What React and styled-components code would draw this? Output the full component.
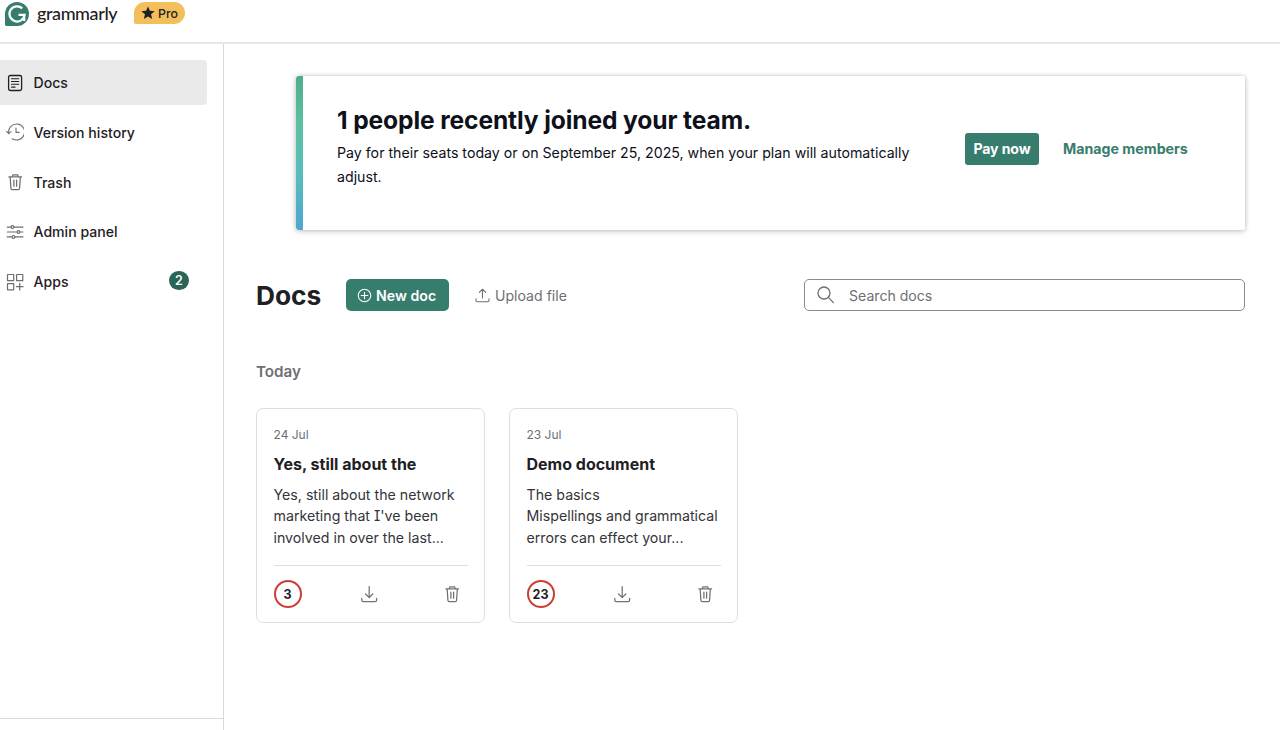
import React from "react";
import styled, { createGlobalStyle, ThemeProvider } from "styled-components";

const theme = {
  colors: {
    brand: "#377d6e",
    brand_strong: "#2a6658",
    text_strong: "#1f2023",
    text_body: "#333438",
    text_weak: "#6e6f73",
    line: "#dedede",
    red: "#d13c32",
    yellow: "#f2bf5a",
  },
};

const GlobalStyle = createGlobalStyle`
  * {
    box-sizing: border-box;
  }

  body {
    margin: 0;
    background: #ffffff;
    font-family: Inter, "Liberation Sans", sans-serif;
    color: ${({ theme }) => theme.colors.text_strong};
    -webkit-font-smoothing: antialiased;
  }

  h1, h2, h3, p {
    margin: 0;
  }

  button {
    font-family: inherit;
    padding: 0;
    border: none;
    background: none;
  }

  svg {
    display: block;
    flex: none;
  }
`;

const Page = styled.div`
  display: flex;
  flex-direction: column;
  height: 730px;
  overflow: hidden;
`;

const Header = styled.header`
  display: flex;
  align-items: flex-start;
  height: 44px;
  padding: 2px 0 0 5px;
  border-bottom: 2px solid #e8e8e8;
  flex: none;
`;

const Wordmark = styled.span`
  margin-left: 8px;
  width: 81px;
  font-family: Lato, sans-serif;
  font-size: 18px;
  font-weight: 500;
  line-height: 22px;
  letter-spacing: -0.4px;
  white-space: nowrap;
`;

const ProBadge = styled.span`
  display: flex;
  align-items: center;
  gap: 3px;
  margin-left: 16px;
  width: 51px;
  height: 22px;
  padding-left: 7px;
  border-radius: 11px 11px 11px 2px;
  background: ${({ theme }) => theme.colors.yellow};
  font-size: 12.3px;
  font-weight: 500;
`;

const Body = styled.div`
  display: flex;
  flex: 1;
  min-height: 0;
`;

const Sidebar = styled.aside`
  display: flex;
  flex-direction: column;
  justify-content: space-between;
  width: 224px;
  border-right: 1px solid #d9d9d9;
  flex: none;
`;

const Nav = styled.nav`
  display: flex;
  flex-direction: column;
  gap: 4.8px;
  padding-top: 16px;
`;

const NavItem = styled.button`
  display: flex;
  align-items: center;
  width: 207px;
  height: 45px;
  padding: 0 18px 0 6px;
  border-radius: 0 4px 4px 0;
  background: ${({ $active }) => ($active ? "#eaeaea" : "transparent")};
  color: ${({ $active, theme }) =>
    $active ? theme.colors.text_strong : theme.colors.text_weak};
`;

const NavLabel = styled.span`
  flex: 1;
  margin-left: 9.5px;
  text-align: left;
  font-size: 14.1px;
  font-weight: 500;
  color: ${({ theme }) => theme.colors.text_strong};
`;

const NavCount = styled.span`
  display: flex;
  align-items: center;
  justify-content: center;
  width: 20px;
  height: 19px;
  margin-top: -2px;
  border-radius: 10px;
  background: ${({ theme }) => theme.colors.brand_strong};
  color: #ffffff;
  font-size: 12.5px;
  font-weight: 600;
`;

const SidebarFooter = styled.div`
  height: 12px;
  border-top: 1px solid #dadada;
`;

const Main = styled.main`
  flex: 1;
  padding: 32px 35px 0 32px;
`;

const BannerShadow = styled.div`
  margin-left: 40px;
  border-radius: 3px;
  box-shadow: 0 0 4px rgba(0, 0, 0, 0.22), 0 2px 6px rgba(0, 0, 0, 0.12);
`;

const Banner = styled.section`
  display: flex;
  height: 154px;
  border-radius: 3px;
  overflow: hidden;
  background: #ffffff;
`;

const BannerStripe = styled.div`
  width: 7px;
  background: linear-gradient(#50ac8b, #5bc0a0 30%, #57bcbc 65%, #4ea6cf);
`;

const BannerText = styled.div`
  width: 662px;
  padding: 29px 0 0 34px;
`;

const BannerTitle = styled.h2`
  font-size: 24.6px;
  line-height: 31px;
  font-weight: 700;
  letter-spacing: -0.12px;
  color: #0e101a;
`;

const BannerCopy = styled.p`
  width: 590px;
  margin-top: 5px;
  font-size: 14.2px;
  line-height: 24px;
  color: #0e101a;
`;

const BannerActions = styled.div`
  display: flex;
  align-items: center;
  gap: 24px;
  height: 32px;
  margin-top: 57px;
`;

const PayButton = styled.button`
  width: 74px;
  height: 32px;
  padding-bottom: 1px;
  border-radius: 3px;
  background: ${({ theme }) => theme.colors.brand};
  color: #ffffff;
  font-size: 14.1px;
  font-weight: 700;
  letter-spacing: -0.1px;
  white-space: nowrap;
`;

const ManageLink = styled.button`
  padding-bottom: 1px;
  color: ${({ theme }) => theme.colors.brand};
  font-size: 14.2px;
  font-weight: 700;
  white-space: nowrap;
`;

const Toolbar = styled.div`
  display: flex;
  align-items: center;
  height: 32px;
  margin-top: 49px;
`;

const Title = styled.h1`
  width: 90px;
  padding-top: 1px;
  font-size: 26.3px;
  font-weight: 700;
  line-height: 32px;
`;

const NewButton = styled.button`
  display: flex;
  align-items: center;
  gap: 4px;
  width: 103px;
  height: 32px;
  padding-left: 11px;
  border-radius: 5px;
  background: ${({ theme }) => theme.colors.brand};
  color: #ffffff;
  font-size: 14.2px;
  font-weight: 600;
  white-space: nowrap;
`;

const UploadButton = styled.button`
  display: flex;
  align-items: center;
  gap: 5px;
  margin-left: 26px;
  color: ${({ theme }) => theme.colors.text_weak};
  font-size: 14.1px;
  white-space: nowrap;
`;

const SearchBox = styled.label`
  display: flex;
  align-items: center;
  gap: 14px;
  width: 441px;
  height: 32px;
  margin-left: auto;
  padding-left: 12px;
  border: 1px solid #8c8c8e;
  border-radius: 5px;
  color: ${({ theme }) => theme.colors.text_weak};
`;

const SearchInput = styled.input`
  flex: 1;
  min-width: 0;
  padding: 0;
  border: none;
  outline: none;
  background: none;
  font-family: inherit;
  font-size: 14.1px;

  &::placeholder {
    color: ${({ theme }) => theme.colors.text_weak};
    opacity: 1;
  }
`;

const GroupTitle = styled.h2`
  margin-top: 50px;
  font-size: 15.2px;
  line-height: 22px;
  font-weight: 600;
  color: ${({ theme }) => theme.colors.text_weak};
`;

const CardList = styled.div`
  display: flex;
  gap: 24px;
  margin-top: 25px;
`;

const DocCard = styled.article`
  display: flex;
  flex-direction: column;
  width: 229px;
  height: 215px;
  padding: 17px 16px 0 16.5px;
  border: 1px solid ${({ theme }) => theme.colors.line};
  border-radius: 7px;
`;

const CardDate = styled.p`
  font-size: 12px;
  line-height: 17px;
  color: ${({ theme }) => theme.colors.text_weak};
`;

const CardTitle = styled.h3`
  margin-top: 10px;
  font-size: 16px;
  line-height: 22px;
  font-weight: 700;
  white-space: nowrap;
`;

const CardExcerpt = styled.p`
  height: 64px;
  margin-top: 9px;
  font-size: 14.2px;
  line-height: 21.3px;
  font-feature-settings: "cv08";
  color: ${({ theme }) => theme.colors.text_body};
  white-space: pre-line;
`;

const CardFooter = styled.div`
  display: flex;
  align-items: center;
  justify-content: space-between;
  height: 57px;
  margin-top: 17px;
  padding-right: 7px;
  border-top: 1px solid ${({ theme }) => theme.colors.line};
  color: #707174;
`;

const AlertCount = styled.span`
  display: flex;
  align-items: center;
  justify-content: center;
  width: 28px;
  height: 28px;
  border: 2px solid ${({ theme }) => theme.colors.red};
  border-radius: 50%;
  font-size: 12.5px;
  font-weight: 700;
  color: ${({ theme }) => theme.colors.text_strong};
`;

const CardActions = styled.div`
  display: flex;
  justify-content: space-between;
  width: 101px;
`;

const IconButton = styled.button`
  color: inherit;
`;

function Icon({ size = 18, width = 1.2, children }) {
  return (
    <svg
      width={size}
      height={size}
      viewBox="0 0 18 18"
      fill="none"
      stroke="currentColor"
      strokeWidth={width}
      strokeLinecap="round"
      strokeLinejoin="round"
    >
      {children}
    </svg>
  );
}

const DocsIcon = () => (
  <Icon width={1.3}>
    <rect x="2.6" y="1.500" width="13" height="15" rx="1.700" />
    <path d="M5.500 4.700h7.200M5.500 7.500h7.200M5.500 10.300h7.200M5.500 13.100h3.600" strokeWidth="1.100" />
  </Icon>
);

const HistoryIcon = () => (
  <Icon width={1.1}>
    <path d="M2.700 10.300A8 8 0 1 1 6.300 15.700" />
    <path d="M.6 8.300l2.100 2.400 2.300-2M10 5v4.400h3.200" />
  </Icon>
);

const TrashIcon = () => (
  <Icon width={1.25}>
    <path d="M2.900 3.900h12.700M6.300 3.700l.5-1.900h4.900l.5 1.900M4.200 4.200l.7 11c.1.9.5 1.300 1.300 1.300h6.100c.8 0 1.200-.4 1.300-1.300l.7-11M7.900 7.200v6M10.600 7.200v6" />
  </Icon>
);

const AdminIcon = () => (
  <Icon width={1.2}>
    <path d="M1.200 4.100h3.600M8 4.100h9M1.200 9h9.700M14.100 9H17M1.200 13.900h4.600M9 13.900h8" />
    <circle cx="6.4" cy="4.1" r="1.4" />
    <circle cx="12.5" cy="9" r="1.4" />
    <circle cx="7.400" cy="13.900" r="1.400" />
  </Icon>
);

const AppsIcon = () => (
  <Icon width={1.2}>
    <rect x="1.500" y="1.500" width="6.200" height="6.200" rx=".3" />
    <rect x="10.600" y="1.500" width="6.200" height="6.200" rx=".3" />
    <rect x="1.500" y="10.600" width="6.200" height="6.200" rx=".3" />
    <path d="M13.700 10.400v6.600M10.400 13.700H17" />
  </Icon>
);

const PlusIcon = () => (
  <Icon size={15} width={1.3}>
    <circle cx="9" cy="9" r="7.500" />
    <path d="M9 5v8M5 9h8" />
  </Icon>
);

const UploadIcon = () => (
  <Icon size={15} width={1.3}>
    <path d="M1.200 12.800v2.200c0 .9.500 1.400 1.400 1.400h12.800c.9 0 1.400-.5 1.400-1.400v-2.200M9 12V1.600M5.200 5.300L9 1.500l3.800 3.800" />
  </Icon>
);

const DownloadIcon = () => (
  <Icon width={1.25}>
    <path d="M1.800 13.400v1.800c0 .9.500 1.400 1.400 1.400h12c.9 0 1.400-.5 1.400-1.400v-1.800M9.200 1.500v11M5.600 9l3.600 3.600L12.800 9" />
  </Icon>
);

const SearchIcon = () => (
  <Icon width={1.3}>
    <circle cx="7" cy="7" r="6" />
    <path d="M11.400 11.400l5 5.200" />
  </Icon>
);

const Logo = () => (
  <svg width="24" height="24" viewBox="0 0 24 24">
    <path d="M12 0a12 12 0 1 1 0 24H1.500Q0 24 0 22.500V12A12 12 0 0 1 12 0z" fill="#377d6e" />
    <path
      d="M17.300 6.400A7.600 7.600 0 1 0 19.600 12.800H13.500M19.200 14.500v4.400"
      fill="none"
      stroke="#fff"
      strokeWidth="2.200"
    />
  </svg>
);

const Star = () => (
  <svg width="14" height="14" viewBox="0 0 14 14">
    <path
      d="M7 .4l1.900 4.400 4.800.4L10 8.300l1.200 4.800L7 10.500l-4.200 2.600L4 8.300.3 5.200l4.800-.4z"
      fill="#1f2023"
    />
  </svg>
);

const navItems = [
  { label: "Docs", icon: <DocsIcon />, active: true },
  { label: "Version history", icon: <HistoryIcon /> },
  { label: "Trash", icon: <TrashIcon /> },
  { label: "Admin panel", icon: <AdminIcon /> },
  { label: "Apps", icon: <AppsIcon />, count: 2 },
];

const docs = [
  {
    date: "24 Jul",
    title: "Yes, still about the",
    excerpt:
      "Yes, still about the network\nmarketing that I've been\ninvolved in over the last...",
    alerts: 3,
  },
  {
    date: "23 Jul",
    title: "Demo document",
    excerpt: "The basics\nMispellings and grammatical\nerrors can effect your...",
    alerts: 23,
  },
];

function DocCardItem({ doc }) {
  return (
    <DocCard>
      <CardDate>{doc.date}</CardDate>
      <CardTitle>{doc.title}</CardTitle>
      <CardExcerpt>{doc.excerpt}</CardExcerpt>
      <CardFooter>
        <AlertCount>{doc.alerts}</AlertCount>
        <CardActions>
          <IconButton aria-label="Download">
            <DownloadIcon />
          </IconButton>
          <IconButton aria-label="Delete">
            <TrashIcon />
          </IconButton>
        </CardActions>
      </CardFooter>
    </DocCard>
  );
}

function App() {
  return (
    <ThemeProvider theme={theme}>
      <GlobalStyle />
      <Page>
        <Header>
          <Logo />
          <Wordmark>grammarly</Wordmark>
          <ProBadge>
            <Star />
            Pro
          </ProBadge>
        </Header>
        <Body>
          <Sidebar>
            <Nav>
              {navItems.map((item) => (
                <NavItem key={item.label} $active={item.active}>
                  {item.icon}
                  <NavLabel>{item.label}</NavLabel>
                  {item.count && <NavCount>{item.count}</NavCount>}
                </NavItem>
              ))}
            </Nav>
            <SidebarFooter />
          </Sidebar>
          <Main>
            <BannerShadow>
              <Banner>
                <BannerStripe />
                <BannerText>
                  <BannerTitle>1 people recently joined your team.</BannerTitle>
                  <BannerCopy>
                    Pay for their seats today or on September 25, 2025, when your
                    plan will automatically adjust.
                  </BannerCopy>
                </BannerText>
                <BannerActions>
                  <PayButton>Pay now</PayButton>
                  <ManageLink>Manage members</ManageLink>
                </BannerActions>
              </Banner>
            </BannerShadow>
            <Toolbar>
              <Title>Docs</Title>
              <NewButton>
                <PlusIcon />
                New doc
              </NewButton>
              <UploadButton>
                <UploadIcon />
                Upload file
              </UploadButton>
              <SearchBox>
                <SearchIcon />
                <SearchInput placeholder="Search docs" />
              </SearchBox>
            </Toolbar>
            <GroupTitle>Today</GroupTitle>
            <CardList>
              {docs.map((doc) => (
                <DocCardItem key={doc.title} doc={doc} />
              ))}
            </CardList>
          </Main>
        </Body>
      </Page>
    </ThemeProvider>
  );
}

export default App;
